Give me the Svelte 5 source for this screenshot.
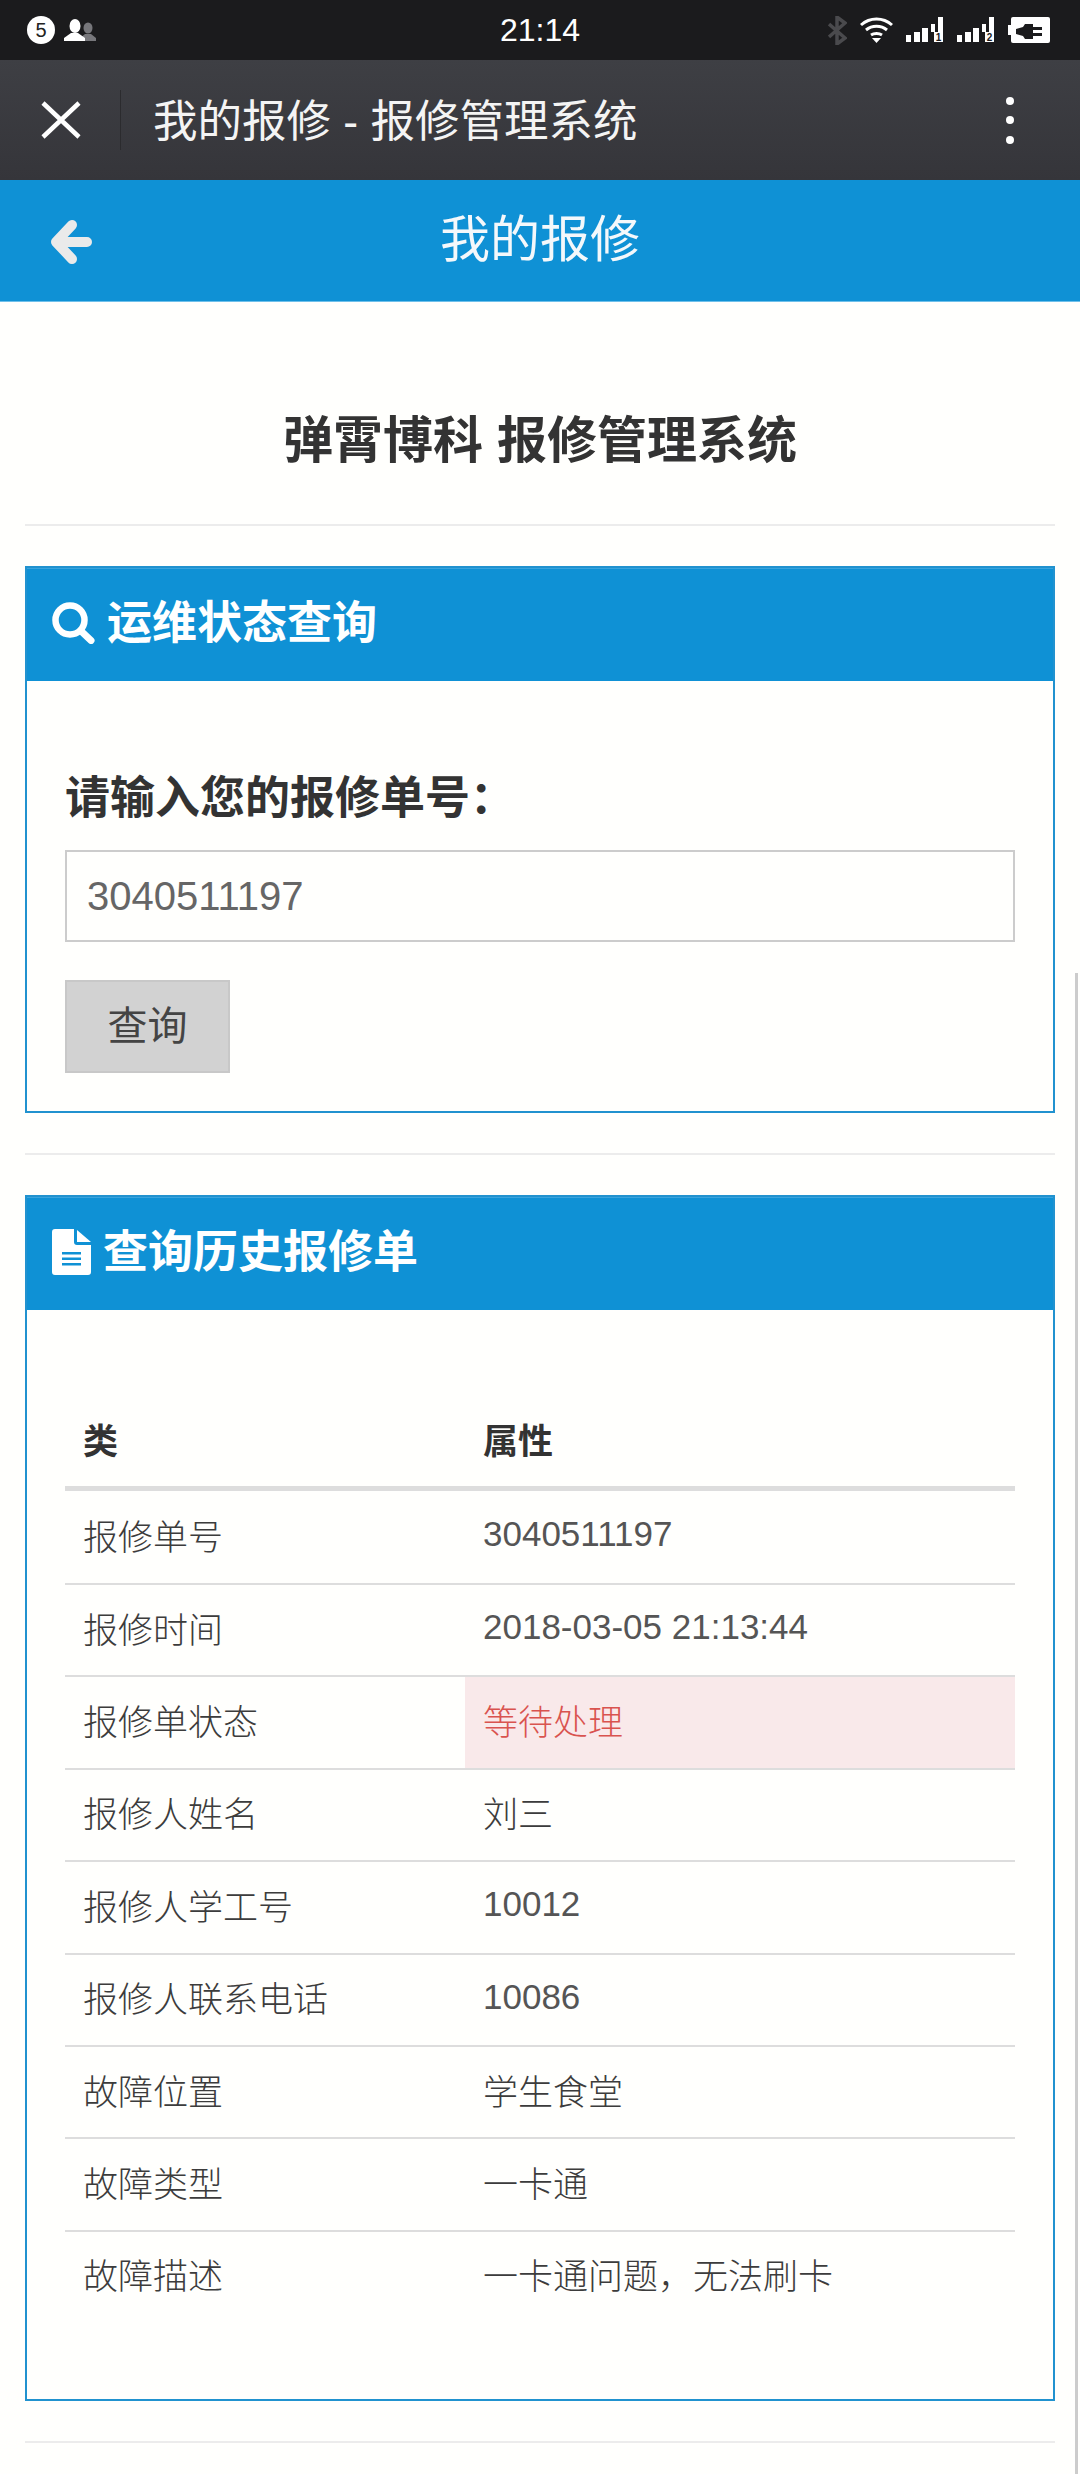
<script>
  const rows = [
    ['报修单号', '3040511197', 'num'],
    ['报修时间', '2018-03-05 21:13:44', 'num'],
    ['报修单状态', '等待处理', 'danger'],
    ['报修人姓名', '刘三'],
    ['报修人学工号', '10012', 'num'],
    ['报修人联系电话', '10086', 'num'],
    ['故障位置', '学生食堂'],
    ['故障类型', '一卡通'],
    ['故障描述', '一卡通问题，无法刷卡']
  ];
  const sims = ['1', '2'];
</script>

<div class="page">
  <div class="statusbar">
    <div class="status-left">
      <span class="badge">5</span>
      <svg width="32" height="22" viewBox="0 0 32 22">
        <ellipse cx="24" cy="9" rx="4.500" ry="5.500" fill="#77777b" />
        <path d="M16 22v-3l5-4h6l5 4v3z" fill="#77777b" />
        <ellipse cx="11" cy="7" rx="5.500" ry="7" fill="#fff" />
        <path d="M0 22v-3l7-5h7l7 5v3z" fill="#fff" />
      </svg>
    </div>
    <span class="clock">21:14</span>
    <div class="status-right">
      <svg class="bt" width="19" height="29" viewBox="0 0 19 29" fill="none" stroke="#4a4a4d" stroke-width="3.500">
        <path d="M1 8l16 14-8 6V1l8 6L1 21" />
      </svg>
      <svg class="wifi" width="33" height="26" viewBox="0 0 33 26" fill="none" stroke="#fff" stroke-width="3">
        <path d="M1 8c9-8 22-8 31 0M6 13c6-5 15-5 21 0M11 18c3-2 8-2 11 0" />
        <path d="M12 21h9l-4.500 5z" fill="#fff" stroke="none" />
      </svg>
      {#each sims as sim}
        <svg class="sim" width="38" height="26" viewBox="0 0 38 26">
          <path fill="#fff" d="M0 18h5v7H0zM8 15h6v10H8zM16 11h6v14h-6zM25 7h4v8h-4zM32 0h5v15h-5zM28 15h9v10h-9z" />
          <text x="32.500" y="24" text-anchor="middle" class="sim-no">{sim}</text>
        </svg>
      {/each}
      <svg class="battery" width="42" height="26" viewBox="0 0 42 26">
        <rect x="3" y="0" width="39" height="26" rx="2" fill="#fff" />
        <path d="M0 8h3v10H0z" fill="#fff" />
        <path d="M8 12l7-2 2-3h8v3h9v3h-9v3h9v3h-9v3h-8l-2-3-7-2z" fill="#1b1b1d" />
      </svg>
    </div>
  </div>

  <div class="webview-bar">
    <svg class="close" width="40" height="38" viewBox="0 0 40 38" stroke="#fff" stroke-width="4.500">
      <path d="M2 2l36 34M38 2L2 36" />
    </svg>
    <span class="divider"></span>
    <span class="webview-title">我的报修 - 报修管理系统</span>
    <div class="dots"><i></i><i></i><i></i></div>
  </div>

  <header class="appbar">
    <svg class="back" width="42" height="44" viewBox="0 0 42 44">
      <path d="M22 5L6 22l16 17M8 22h29" fill="none" stroke="#eaeaea" stroke-width="10" stroke-linecap="round" stroke-linejoin="round" />
    </svg>
    <span>我的报修</span>
  </header>

  <main class="content">
    <h1>弹霄博科 报修管理系统</h1>
    <hr />

    <section class="panel">
      <h2 class="panel-head">
        <svg width="43" height="42" viewBox="0 0 43 42">
          <circle cx="18" cy="18" r="14.500" fill="none" stroke="#fff" stroke-width="6.500" />
          <path d="M29 29l10 9.500" stroke="#fff" stroke-width="7" stroke-linecap="round" />
        </svg>
        <span>运维状态查询</span>
      </h2>
      <div class="panel-body form">
        <label for="order">请输入您的报修单号：</label>
        <input id="order" value="3040511197" />
        <button>查询</button>
      </div>
    </section>
    <hr />

    <section class="panel">
      <h2 class="panel-head">
        <svg width="39" height="46" viewBox="0 0 39 46">
          <path fill-rule="evenodd" fill="#fff" d="M0 3a3 3 0 0 1 3-3h19v13a3 3 0 0 0 3 3h14v27a3 3 0 0 1-3 3H3a3 3 0 0 1-3-3zM10 23v2.500h19V23zM10 28.500V31h19v-2.500zM10 34v2.500h19V34z" />
          <path fill="#fff" d="M25 1l14 12H25z" />
        </svg>
        <span>查询历史报修单</span>
      </h2>
      <div class="panel-body history">
        <table>
          <thead>
            <tr><th>类</th><th>属性</th></tr>
          </thead>
          <tbody>
            {#each rows as row}
              <tr>
                <td>{row[0]}</td>
                <td class={row[2]}>{row[1]}</td>
              </tr>
            {/each}
          </tbody>
        </table>
      </div>
    </section>
    <hr />
  </main>
  <div class="scrollbar"></div>
</div>

<style>
  :global(body) {
    margin: 0;
    background: #fffffd;
  }

  .page {
    position: relative;
    height: 2474px;
    overflow: hidden;
    font-family: "Liberation Sans", "Noto Sans CJK SC", sans-serif;
    color: #333;
  }

  .statusbar {
    display: flex;
    align-items: center;
    justify-content: space-between;
    height: 60px;
    padding: 0 30px 0 27px;
    box-sizing: border-box;
    background: #1b1b1d;
    position: relative;
  }

  .status-left {
    display: flex;
    align-items: center;
    gap: 9px;
  }

  .badge {
    width: 28px;
    height: 28px;
    border-radius: 50%;
    background: #fff;
    color: #222;
    font-size: 20px;
    line-height: 28px;
    text-align: center;
  }

  .clock {
    position: absolute;
    left: 0;
    right: 0;
    text-align: center;
    color: #fff;
    font-size: 32px;
  }

  .status-right {
    display: flex;
    align-items: center;
  }

  .bt,
  .wifi,
  .sim {
    margin-right: 13px;
  }

  .sim-no {
    font-size: 10px;
    font-weight: 700;
    fill: #1b1b1d;
  }

  .webview-bar {
    display: flex;
    align-items: center;
    height: 120px;
    background: linear-gradient(#3e3f44, #35353a);
  }

  .close {
    margin-left: 41px;
  }

  .divider {
    width: 1px;
    height: 60px;
    margin-left: 39px;
    background: #2b2b2e;
  }

  .webview-title {
    margin-left: 32px;
    padding-bottom: 6px;
    flex: 1;
    color: #f4f4f4;
    font-size: 44.500px;
  }

  .dots {
    display: flex;
    flex-direction: column;
    gap: 11.500px;
    margin-right: 66px;
  }

  .dots i {
    width: 8px;
    height: 8px;
    border-radius: 50%;
    background: #fff;
  }

  .appbar {
    position: relative;
    height: 122px;
    display: flex;
    align-items: center;
    justify-content: center;
    background: #0f91d5;
    color: #f4f8fb;
    font-size: 50px;
    border-bottom: 1px solid #6fc0ea;
    box-sizing: border-box;
    padding-bottom: 11px;
  }

  .back {
    position: absolute;
    left: 50px;
    top: 40px;
  }

  .content {
    padding: 0 25px;
  }

  h1 {
    margin: 0;
    padding-top: 106px;
    text-align: center;
    font-size: 50px;
    line-height: 66px;
    font-weight: 700;
    color: #333;
  }

  hr {
    height: 2px;
    margin: 0;
    border: 0;
    background: #ececec;
  }

  h1 + hr {
    margin-top: 50px;
  }

  .panel {
    margin: 40px 0;
    border: 2px solid #2192cf;
  }

  .panel-head {
    display: flex;
    align-items: center;
    gap: 13px;
    height: 113px;
    margin: 0;
    padding: 0 0 4px 25px;
    box-sizing: border-box;
    background: #0f91d5;
    border-top: 1px solid #3aa3dc;
    color: #fff;
    font-size: 45px;
    font-weight: 700;
  }

  .panel-head span {
    margin-left: -1px;
    margin-bottom: 8px;
  }

  .panel-body {
    padding: 0 38px;
    background: #fffffd;
  }

  .form {
    padding-top: 88px;
    padding-bottom: 38px;
  }

  label {
    display: block;
    font-size: 45px;
    line-height: 60px;
    font-weight: 700;
    color: #333;
  }

  input {
    display: block;
    width: 100%;
    height: 92px;
    margin-top: 21px;
    padding: 0 20px;
    box-sizing: border-box;
    border: 2px solid #ccc;
    background: #fffffd;
    color: #666;
    font: 40px "Liberation Sans", sans-serif;
  }

  button {
    display: block;
    width: 165px;
    height: 93px;
    margin-top: 38px;
    padding: 0 0 8px;
    border: 2px solid #c8c8c8;
    background: #d2d2d2;
    color: #444;
    font: 40px "Liberation Sans", "Noto Sans CJK SC", sans-serif;
  }

  .history {
    padding-top: 81px;
    padding-bottom: 77px;
  }

  table {
    width: 100%;
    border-collapse: collapse;
    table-layout: fixed;
  }

  th {
    height: 95px;
    padding: 0 18px;
    text-align: left;
    font-size: 35px;
    font-weight: 700;
    border-bottom: 5px solid #ddd;
  }

  th:first-child,
  td:first-child {
    width: 400px;
    box-sizing: border-box;
  }

  td {
    height: 84.400px;
    padding: 0 18px 6px;
    font-size: 35px;
    font-weight: 300;
    color: #3c3c3c;
    border-top: 2px solid #ddd;
  }

  td.num {
    color: #555;
  }

  tbody tr:first-child td {
    border-top: 0;
    height: 86px;
  }

  td.danger {
    background: #f9e9ea;
    color: #d9534f;
  }

  .scrollbar {
    position: absolute;
    right: 2px;
    top: 973px;
    width: 3px;
    bottom: 0;
    background: #ccc;
  }
</style>
